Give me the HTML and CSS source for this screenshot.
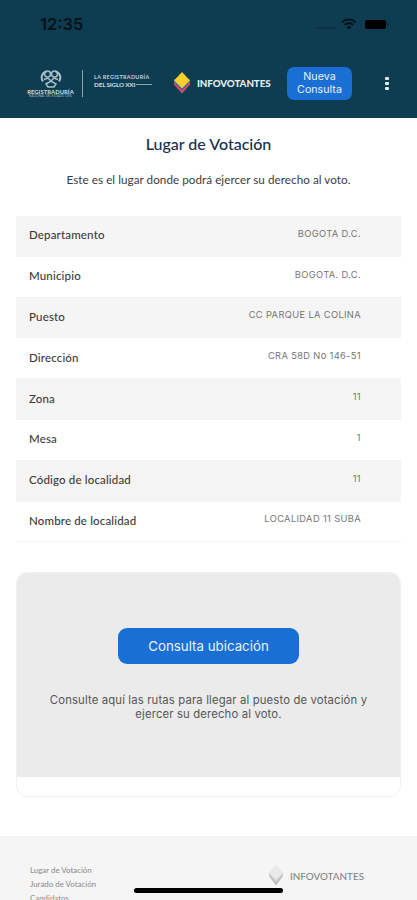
FILE: index.html
```html
<!DOCTYPE html>
<html lang="es">

<head>
    <meta charset="UTF-8">
    <meta name="viewport" content="width=device-width, initial-scale=1.0">
    <title>Infovotantes</title>
    <link rel="stylesheet" href="styles.css">
</head>

<body>
    <header>
        <div class="status-bar">
            <span class="time">12:35</span>
            <div class="status-icons">
                <span class="signal"></span>
                <svg class="wifi" viewBox="0 0 16 12" width="16" height="12">
                    <path d="M1.2 4.2a9.8 9.8 0 0 1 13.6 0M3.7 6.9a6.2 6.2 0 0 1 8.6 0" fill="none" stroke="#04131b" stroke-width="2" />
                    <path d="M8 11.6 5.6 9.3a3.4 3.4 0 0 1 4.8 0z" fill="#04131b" />
                </svg>
                <span class="battery"></span>
            </div>
        </div>
        <nav>
            <div class="logo-registraduria">
                <svg viewBox="0 0 22 20" width="22" height="20" fill="none" stroke="#a9bfc8">
                    <path d="M6.5 2.5C1.5 4 .5 9 3 12.500M15.500 2.500c5 1.500 6 6.500 3.500 10" stroke-width="2" />
                    <circle cx="7.500" cy="5" r="3" stroke-width="1.500" />
                    <circle cx="14.500" cy="5" r="3" stroke-width="1.500" />
                    <path d="M4 10.500 8 9l3 3 3-3 4 1.500M6 15l5-3 5 3-2 3H8z" stroke-width="1.500" />
                </svg>
                <span class="logo-name">REGISTRADURÍA</span>
                <span class="logo-sub">NACIONAL DEL ESTADO CIVIL</span>
            </div>
            <span class="divider"></span>
            <div class="logo-siglo">
                <span>LA REGISTRADURÍA</span>
                <strong>DEL SIGLO XXI</strong>
            </div>
            <a href="#" class="brand">
                <svg viewBox="0 0 16 22" width="16" height="22">
                    <path d="M0 12.500 8 21.500l8-9v-3H0z" fill="#dc4f5c" />
                    <path d="M0 10 8 18.500 16 10V7H0z" fill="#3d5bb0" />
                    <path d="M8 0l8 8.500-8 8-8-8z" fill="#fbd02d" />
                </svg>
                <span>INFOVOTANTES</span>
            </a>
            <button class="btn-nueva">Nueva Consulta</button>
            <div class="menu"><i></i><i></i><i></i></div>
        </nav>
    </header>

    <main>
        <h1>Lugar de Votación</h1>
        <p class="intro">Este es el lugar donde podrá ejercer su derecho al voto.</p>

        <dl class="datos">
            <div class="row">
                <dt>Departamento</dt>
                <dd>BOGOTA D.C.</dd>
            </div>
            <div class="row">
                <dt>Municipio</dt>
                <dd>BOGOTA. D.C.</dd>
            </div>
            <div class="row">
                <dt>Puesto</dt>
                <dd>CC PARQUE LA COLINA</dd>
            </div>
            <div class="row">
                <dt>Dirección</dt>
                <dd>CRA 58D No 146-51</dd>
            </div>
            <div class="row">
                <dt>Zona</dt>
                <dd>11</dd>
            </div>
            <div class="row">
                <dt>Mesa</dt>
                <dd>1</dd>
            </div>
            <div class="row">
                <dt>Código de localidad</dt>
                <dd>11</dd>
            </div>
            <div class="row">
                <dt>Nombre de localidad</dt>
                <dd>LOCALIDAD 11 SUBA</dd>
            </div>
        </dl>

        <!-- Mapa -->
        <div class="card">
            <div class="card-body">
                <button class="btn-ubicacion">Consulta ubicación</button>
                <p>Consulte aquí las rutas para llegar al puesto de votación y ejercer su derecho al voto.</p>
            </div>
        </div>
    </main>

    <footer>
        <div class="links">
            <a href="#">Lugar de Votación</a>
            <a href="#">Jurado de Votación</a>
            <a href="#">Candidatos</a>
        </div>
        <div class="brand-footer">
            <svg viewBox="0 0 14 21" width="14" height="21">
                <path d="M0 11 7 20.500l7-9.500V8H0z" fill="#bdbdbd" />
                <path d="M0 9l7 8 7-8V7H0z" fill="#d2d2d2" />
                <path d="M7 0l7 8-7 7-7-7z" fill="#e9e9e9" />
            </svg>
            <span>INFOVOTANTES</span>
        </div>
    </footer>
    <div class="home-indicator"></div>
</body>

</html>
```
FILE: styles.css
```css
:root {
    --header: #0e3c50;
    --blue: #1a6fd4;
    --gray: #f5f5f5;
}

* {
    margin: 0;
    padding: 0;
    box-sizing: border-box;
}

body {
    height: 900px;
    overflow: hidden;
    background: #fff;
    color: #3c3c3c;
    font-family: Lato, sans-serif;
}

a {
    text-decoration: none;
}

button {
    border: none;
    background: var(--blue);
    color: #e9f2fc;
    font-family: Inter, sans-serif;
}

header {
    height: 118px;
    background: var(--header);
}

.status-bar {
    height: 48px;
    padding: 0 28px 0 40px;
    display: flex;
    justify-content: space-between;
    align-items: center;
}

.time {
    font: 600 16.5px Inter, sans-serif;
    color: #04131b;
}

.status-icons {
    display: flex;
    align-items: center;
}

.signal {
    width: 20px;
    height: 2px;
    margin: 7px 6px 0 0;
    background: #0b3345;
}

.battery {
    width: 21px;
    height: 9px;
    margin: 0 3px 0 8px;
    border-radius: 2px;
    background: #000;
    position: relative;
}

.battery::after {
    content: "";
    position: absolute;
    left: 22px;
    top: 3px;
    width: 2px;
    height: 3px;
    background: #092a39;
}

nav {
    height: 70px;
    padding-left: 27px;
    display: flex;
    align-items: center;
}

.logo-registraduria {
    width: 47px;
    display: flex;
    flex-direction: column;
    align-items: center;
    white-space: nowrap;
}

.logo-name {
    font-size: 5.9px;
    font-weight: 900;
    line-height: 6px;
    color: #c3d3da;
}

.logo-sub {
    font-size: 3.1px;
    line-height: 3px;
    color: #a9bfc8;
}

.divider {
    width: 1px;
    height: 27px;
    margin: 0 11px 0 8px;
    background: #8aa5b1;
}

.logo-siglo {
    width: 58px;
    margin-top: -4px;
    color: #c3d3da;
    white-space: nowrap;
    font-size: 5.4px;
    font-weight: 700;
    line-height: 7px;
    letter-spacing: .35px;
}

.logo-siglo strong {
    display: flex;
    align-items: center;
    gap: 1px;
    font-size: 6.4px;
    font-weight: 900;
    letter-spacing: -.2px;
}

.logo-siglo strong::after {
    content: "";
    flex: 1;
    height: 1px;
    background: #8aa5b1;
}

.brand {
    margin-left: 22px;
    width: 113px;
    display: flex;
    align-items: center;
    gap: 7px;
    font-size: 9.8px;
    font-weight: 900;
    letter-spacing: -.1px;
    color: #e4edf1;
}

.btn-nueva {
    width: 65px;
    height: 33px;
    border-radius: 7px;
    font-size: 10.7px;
    line-height: 13px;
}

.menu {
    margin-left: 33px;
    display: flex;
    flex-direction: column;
    gap: 2px;
}

.menu i {
    width: 4px;
    height: 3px;
    border-radius: 1px;
    background: #e4edf1;
}

main {
    height: 718px;
    padding: 16px 16px 0;
}

h1 {
    font-size: 16px;
    line-height: 20px;
    font-weight: 500;
    text-align: center;
    color: #14304f;
}

.intro {
    margin-top: 17px;
    font-size: 11.7px;
    line-height: 16px;
    letter-spacing: .04px;
    text-align: center;
}

.datos {
    margin-top: 29px;
}

.row {
    height: 40.8px;
    padding: 0 40px 2px 13px;
    display: flex;
    justify-content: space-between;
    align-items: center;
    border-bottom: 1px solid #f3f3f3;
}

.row:nth-child(odd) {
    background: var(--gray);
}

dt {
    font-size: 11.5px;
    font-weight: 500;
    letter-spacing: .16px;
}

dd {
    margin-bottom: 3px;
    font: 9.3px Inter, sans-serif;
    letter-spacing: .36px;
    color: #757575;
}

.card {
    margin-top: 30px;
    height: 225px;
    border: 1px solid #f1f1f1;
    border-radius: 11px;
    overflow: hidden;
}

.card-body {
    height: 204px;
    padding: 55px 24px 0;
    background: #ebebeb;
    text-align: center;
}

.btn-ubicacion {
    width: 181px;
    height: 36px;
    border-radius: 9px;
    font-size: 13.3px;
}

.card-body p {
    margin-top: 29px;
    font: 11.3px/14px Inter, sans-serif;
    letter-spacing: .15px;
    color: #555;
}

footer {
    height: 64px;
    padding: 27px 53px 0 30px;
    display: flex;
    justify-content: space-between;
    align-items: flex-start;
    background: var(--gray);
}

.links a {
    display: block;
    font-size: 7.9px;
    line-height: 14px;
    color: #8a8a8a;
}

.brand-footer {
    display: flex;
    align-items: center;
    gap: 7px;
    margin-top: 2px;
    font-size: 9.9px;
    font-weight: 500;
    color: #858585;
}

.home-indicator {
    position: absolute;
    left: 134px;
    top: 888px;
    width: 149px;
    height: 5px;
    border-radius: 3px;
    background: #000;
}
```
